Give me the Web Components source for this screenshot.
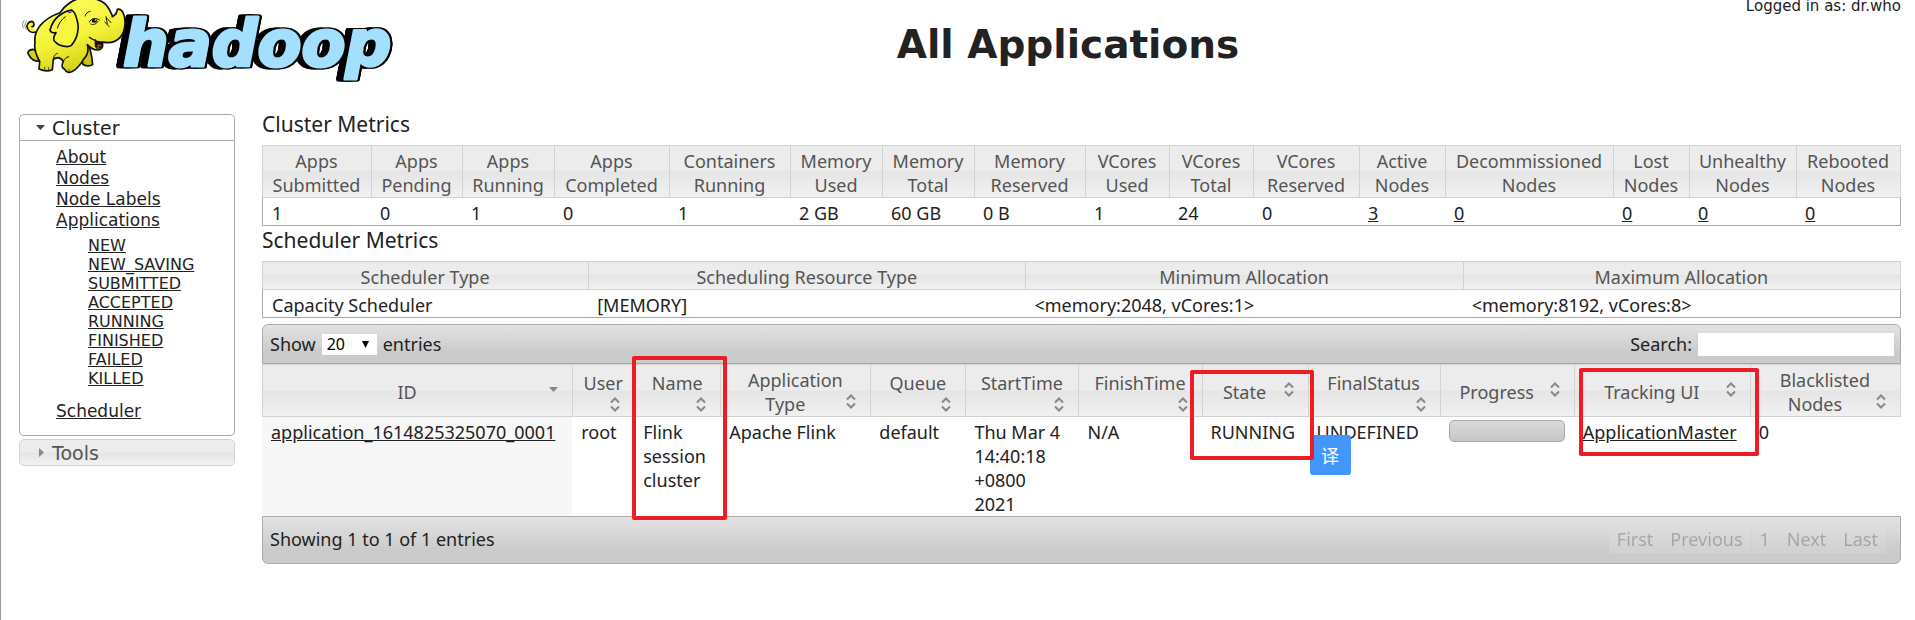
<!DOCTYPE html>
<html lang="en">
<head>
<meta charset="utf-8">
<title>All Applications</title>
<style>
body {
  margin: 0;
  min-height: 100vh;
  box-sizing: border-box;
  border-left: 1px solid #999;
  background: #fff;
  color: #222;
  font: 18px/24px "Noto Sans", "Noto Sans CJK SC", sans-serif;
  --ui-font: "DejaVu Sans", sans-serif;
  --line: #aaa;
  --soft-line: #d3d3d3;
  --glass: linear-gradient(#ececec 0, #ececec 48%, #e5e5e5 52%, #f1f1f1 100%);
  --bar: linear-gradient(#e3e3e3 0, #cbcbcb 70%, #cbcbcb 100%);
}
</style>
</head>
<body>
<yarn-page>
  <page-header slot="header" user="dr.who">All Applications</page-header>
  <side-nav slot="nav"></side-nav>
  <metrics-table id="cluster" caption="Cluster Metrics"></metrics-table>
  <metrics-table id="scheduler" caption="Scheduler Metrics"></metrics-table>
  <apps-table></apps-table>
</yarn-page>

<script>
const define = (name, html, init) => {
  const template = document.createElement('template');
  template.innerHTML = html;
  customElements.define(name, class extends HTMLElement {
    constructor() {
      super();
      this.attachShadow({ mode: 'open' }).append(template.content.cloneNode(true));
    }
    connectedCallback() { if (init) init(this, this.shadowRoot); }
  });
};

define('yarn-page', `
<style>
:host { display: block; padding: 0 14px 0 18px; }
.columns { display: grid; grid-template-columns: 216px minmax(0, 1fr); gap: 27px; }
nav { padding-top: 4px; }
</style>
<header><slot name="header"></slot></header>
<div class="columns">
  <nav><slot name="nav"></slot></nav>
  <main><slot></slot></main>
</div>`);

define('hadoop-logo', `
<style>
:host { display: block; }
svg { display: block; overflow: visible; }
text {
  font: italic bold 64px "DejaVu Sans", sans-serif; stroke-linejoin: round;
  filter: drop-shadow(2px 0 0 #000) drop-shadow(-7px 0 0 #000) drop-shadow(0 1px 0 #000) drop-shadow(0 -1px 0 #000);
}
</style>
<svg width="216" height="84" viewBox="19 0 216 84" role="img" aria-label="hadoop">
  <text x="123" y="66" fill="#a3dfff" stroke="#a3dfff" stroke-width="3">hadoop</text>
  <defs>
    <linearGradient id="skin" x1="0" y1="0" x2="0.4" y2="1">
      <stop offset="0" stop-color="#ffff6a"/><stop offset="0.6" stop-color="#f3f338"/><stop offset="1" stop-color="#d4cf18"/>
    </linearGradient>
  </defs>
  <g transform="scale(.33333)" stroke="#111" stroke-width="5" stroke-linecap="round" stroke-linejoin="round" fill="none">
    <path d="M108 96C96 100 86 94 82 84C78 74 86 64 96 64C104 68 104 80 96 80" fill="#f3f338"/>
    <path d="M70 84C66 76 67 68 72 62M78 88C73 80 74 70 80 62" stroke-width="2" stroke="#555"/>
    <path d="M98 148C86 150 80 156 86 164C92 178 106 186 120 183L126 160Z" fill="#d4cf18"/>
    <path d="M244 160L248 192C256 199 270 199 278 194L275 170C273 158 270 150 268 138Z" fill="#c9c414"/>
    <path fill="url(#skin)" d="M205 12C235-14 290-12 318 14C330 28 334 40 338 50C346 44 352 40 352 28C366 24 376 45 375 70C374 105 355 128 322 128L306 126C312 140 304 150 292 150C280 150 272 145 262 134C266 150 264 164 252 176C240 196 230 208 218 214C208 220 198 216 194 208C184 203 184 196 190 184C187 178 184 175 174 173C168 174 163 175 160 178L157 209C146 214 130 213 117 207L119 186C112 170 100 150 105 128C100 90 130 55 180 38C188 26 196 18 205 12Z"/>
    <path d="M160 178C162 166 166 162 172 160M190 184C194 176 198 172 206 170M120 183C116 178 112 172 110 166" stroke-width="3"/>
    <path fill="#f6f640" d="M214 30C192 34 160 50 150 90C152 98 160 100 168 98C158 112 160 124 166 126C176 138 204 144 214 136C232 116 240 84 230 56C227 44 222 34 214 30Z"/>
    <path d="M196 50C184 58 176 72 172 84M206 38L214 36M206 12C196 18 188 26 182 36" stroke-width="3"/>
    <path d="M255 48C257 40 263 36 270 34M268 66C274 54 288 52 298 60M272 72C280 76 290 72 294 64M320 54L333 68M314 66L328 80M318 50L322 72M336 50L350 42" stroke-width="3"/>
    <ellipse cx="283" cy="62" rx="8" ry="6" fill="#111" stroke="none"/>
    <circle cx="286" cy="60" r="2" fill="#fff" stroke="none"/>
    <path d="M268 112C284 124 302 128 318 128M286 120C286 132 284 140 290 144C302 146 310 138 306 126" stroke-width="4"/>
    <path d="M288 122L306 127C308 138 298 144 288 140Z" fill="#111" stroke="none"/>
    <path d="M291 137C294 132 300 132 303 136L296 141Z" fill="#c33" stroke="none"/>
    <path d="M134 202L134 208M146 203L146 209M206 208L210 213" stroke-width="2"/>
  </g>
</svg>`);

define('page-header', `
<style>
:host { display: block; font-family: var(--ui-font); }
.head { display: grid; grid-template-columns: 216px minmax(0, 1fr); grid-template-rows: auto 1fr; min-height: 110px; }
hadoop-logo { grid-row: 1 / 3; }
.user { text-align: right; font-size: 15px; line-height: 12px; }
h1 { margin: 9px 0 0; text-align: center; font-size: 39px; line-height: 48px; }
</style>
<div class="head">
  <hadoop-logo></hadoop-logo>
  <div class="user"></div>
  <h1><slot></slot></h1>
</div>`, (host, root) => {
  root.querySelector('.user').textContent = 'Logged in as: ' + host.getAttribute('user');
});

define('nav-section', `
<style>
:host { display: block; margin-bottom: 3px; font-family: var(--ui-font); }
button {
  display: flex; align-items: center; gap: 6px; width: 100%; height: 27px; box-sizing: border-box;
  padding: 0 16px; border: 1px solid var(--soft-line); border-radius: 5px;
  background: var(--glass); color: #555; font: 19px/24px var(--ui-font); text-align: left;
}
svg { width: 10px; height: 10px; fill: #888; }
.open { display: none; }
.panel { display: none; }
:host([open]) button { background: #fff; color: #222; border-color: var(--line); border-radius: 5px 5px 0 0; }
:host([open]) .open { display: block; fill: #444; }
:host([open]) .closed { display: none; }
:host([open]) .panel { display: block; padding: 6px 0 13px 36px; border: 1px solid var(--line); border-top: 0; border-radius: 0 0 5px 5px; }
</style>
<button type="button">
  <svg class="open" viewBox="0 0 10 10"><path d="M0 2H9L4.500 7Z"/></svg>
  <svg class="closed" viewBox="0 0 10 10"><path d="M3 0V9L8 4.500Z"/></svg>
  <span></span>
</button>
<div class="panel"><slot></slot></div>`, (host, root) => {
  root.querySelector('span').textContent = host.getAttribute('label');
  const button = root.querySelector('button');
  button.setAttribute('aria-expanded', host.hasAttribute('open'));
  button.onclick = () => button.setAttribute('aria-expanded', host.toggleAttribute('open'));
});

define('side-nav', `
<style>
:host { display: block; font: 17px/21px var(--ui-font); }
ul { list-style: none; margin: 0; padding: 0; }
ul ul { margin: 5px 0 13px; padding-left: 32px; font-size: 16px; line-height: 19px; }
a { color: #222; }
</style>
<nav-section label="Cluster" open>
  <ul>
    <li><a href="#about">About</a></li>
    <li><a href="#nodes">Nodes</a></li>
    <li><a href="#labels">Node Labels</a></li>
    <li><a href="#apps">Applications</a>
      <ul>
        <li><a href="#new">NEW</a></li>
        <li><a href="#new-saving">NEW_SAVING</a></li>
        <li><a href="#submitted">SUBMITTED</a></li>
        <li><a href="#accepted">ACCEPTED</a></li>
        <li><a href="#running">RUNNING</a></li>
        <li><a href="#finished">FINISHED</a></li>
        <li><a href="#failed">FAILED</a></li>
        <li><a href="#killed">KILLED</a></li>
      </ul>
    </li>
    <li><a href="#scheduler">Scheduler</a></li>
  </ul>
</nav-section>
<nav-section label="Tools"></nav-section>`);

const METRICS = {
  cluster: [
    ['Apps Submitted', '1', 109], ['Apps Pending', '0', 91], ['Apps Running', '1', 92],
    ['Apps Completed', '0', 115], ['Containers Running', '1', 121], ['Memory Used', '2 GB', 92],
    ['Memory Total', '60 GB', 92], ['Memory Reserved', '0 B', 111], ['VCores Used', '1', 84],
    ['VCores Total', '24', 84], ['VCores Reserved', '0', 106], ['Active Nodes', '3', 86, 1],
    ['Decommissioned Nodes', '0', 168, 1], ['Lost Nodes', '0', 76, 1],
    ['Unhealthy Nodes', '0', 107, 1], ['Rebooted Nodes', '0', 105, 1]
  ],
  scheduler: [
    ['Scheduler Type', 'Capacity Scheduler', 326], ['Scheduling Resource Type', '[MEMORY]', 437],
    ['Minimum Allocation', '<memory:2048, vCores:1>', 437], ['Maximum Allocation', '<memory:8192, vCores:8>', 438]
  ]
};
define('metrics-table', `
<style>
:host { display: block; }
h2 { margin: 0 0 7px; font-size: 21px; line-height: 28px; font-weight: 400; }
table { width: 100%; table-layout: fixed; border-spacing: 0; }
thead { background: var(--glass); }
th { padding: 3px 1px 0 0; border: solid var(--soft-line); border-width: 1px 0 0 1px; color: #555; font-weight: 400; }
th:last-child { border-right-width: 1px; }
td { padding: 3px 0 0 9px; border: solid var(--line); border-width: 1px 0; border-top-color: var(--soft-line); }
td:first-child { border-left-width: 1px; }
td:last-child { border-right-width: 1px; }
th span { display: block; }
a { color: #222; }
</style>
<h2></h2>
<table><colgroup></colgroup><thead><tr></tr></thead><tbody><tr></tr></tbody></table>`, (host, root) => {
  root.querySelector('h2').textContent = host.getAttribute('caption');
  for (const [label, value, width, linked] of METRICS[host.id]) {
    const col = document.createElement('col');
    col.style.width = width + 'px';
    const th = document.createElement('th');
    th.scope = 'col';
    for (const part of host.id === 'cluster' ? label.split(' ') : [label]) {
      const line = document.createElement('span');
      line.textContent = part;
      th.append(line);
    }
    const td = document.createElement('td');
    if (linked) {
      const a = document.createElement('a');
      a.href = '#nodes';
      a.textContent = value;
      td.append(a);
    } else td.textContent = value;
    root.querySelector('colgroup').append(col);
    root.querySelector('thead tr').append(th);
    root.querySelector('tbody tr').append(td);
  }
});

define('sort-icon', `
<style>
:host { display: block; float: right; width: 20px; height: 18px; }
svg { display: block; width: 20px; height: 18px; fill: none; stroke: #888; stroke-width: 2; }
.down { display: none; fill: #888; stroke: none; }
:host([active]) .both { display: none; }
:host([active]) .down { display: block; }
</style>
<svg class="both" viewBox="0 0 20 18"><path d="M7 7.500L11 3.500L15 7.500M7 11.500L11 15.500L15 11.500"/></svg>
<svg class="down" viewBox="0 0 20 18"><path d="M7 7H16L11.500 12Z"/></svg>`);

define('mark-box', `
<style>
:host { display: block; position: absolute; box-sizing: border-box; border: 4px solid #ee1c25; border-radius: 2px; z-index: 2; pointer-events: none; }
</style>`);

define('apps-table', `
<style>
:host { display: block; margin-top: 6px; }
.bar { display: flex; justify-content: space-between; align-items: center; box-sizing: border-box; background: var(--bar); border: 1px solid var(--line); }
.top { height: 40px; padding: 0 6px 0 7px; border-radius: 6px 6px 0 0; }
.bottom { height: 48px; padding: 0 13px 2px 7px; border-radius: 0 0 6px 6px; }
label { display: flex; align-items: center; gap: 6px; }
.pick { display: grid; align-items: center; }
.pick > * { grid-area: 1 / 1; }
select { appearance: none; width: 55px; height: 21px; padding: 0 5px; border: 0; border-radius: 0; background: #fff; color: #000; font: 16px/21px "Noto Sans", sans-serif; }
.pick svg { justify-self: end; margin-right: 8px; width: 7px; height: 7px; pointer-events: none; }
input { width: 196px; height: 23px; box-sizing: border-box; padding: 0 4px; border: 0; background: #fff; font: inherit; }
table { width: 100%; table-layout: fixed; border-spacing: 0; }
thead { background: var(--glass); }
th { position: relative; box-sizing: border-box; height: 53px; padding: 3px 10px 0 9px; border: solid var(--soft-line); border-width: 1px 0 1px 1px; color: #555; font-weight: 400; vertical-align: middle; }
th:last-child { border-right-width: 1px; }
td { position: relative; padding: 3px 0 0 9px; vertical-align: top; }
td:first-child { background: #f7f7f7; }
td a { color: #222; }
.narrow { padding-right: 10px; }
.progress { width: 116px; height: 22px; box-sizing: border-box; border: 1px solid var(--line); border-radius: 5px; background: linear-gradient(#dadada, #c6c6c6); }
.translate { position: absolute; left: 2px; top: 18px; z-index: 1; width: 41px; height: 40px; padding: 0; border: 0; border-radius: 3px; background: #4496ff; color: #fff; font: 18px/40px "Noto Sans CJK SC", sans-serif; }
.name { left: -3px; top: -9px; width: 95px; height: 164px; }
.state { left: -13px; top: 5px; width: 124px; height: 90px; }
.tracking { left: 4px; top: 3px; width: 180px; height: 88px; }
.pager { display: flex; border-radius: 5px; overflow: hidden; }
.pager button { height: 30px; padding: 0 8px; border: 1px solid #d3d3d3; border-left-width: 0; background: #e0e0e0; color: #555; font: inherit; line-height: 28px; opacity: .35; }
</style>
<div class="bar top">
  <label>Show
    <span class="pick"><select><option>20</option><option>40</option><option>60</option><option>80</option><option>100</option></select>
    <svg viewBox="0 0 8 8"><path d="M0 0H8L4 8Z"/></svg></span>
  entries</label>
  <label>Search: <input type="text"></label>
</div>
<table>
  <colgroup>
    <col style="width:310px"><col style="width:62px"><col style="width:86px"><col style="width:150px"><col style="width:95px"><col style="width:113px">
    <col style="width:123px"><col style="width:106px"><col style="width:132px"><col style="width:134px"><col style="width:176px"><col style="width:151px">
  </colgroup>
  <thead><tr>
    <th scope="col">ID<sort-icon active></sort-icon></th>
    <th scope="col">User<sort-icon></sort-icon></th>
    <th scope="col">Name<sort-icon></sort-icon><mark-box class="name"></mark-box></th>
    <th scope="col">Application Type<sort-icon></sort-icon></th>
    <th scope="col">Queue<sort-icon></sort-icon></th>
    <th scope="col">StartTime<sort-icon></sort-icon></th>
    <th scope="col">FinishTime<sort-icon></sort-icon></th>
    <th scope="col">State<sort-icon></sort-icon><mark-box class="state"></mark-box></th>
    <th scope="col">FinalStatus<sort-icon></sort-icon></th>
    <th scope="col">Progress<sort-icon></sort-icon></th>
    <th scope="col">Tracking UI<sort-icon></sort-icon><mark-box class="tracking"></mark-box></th>
    <th scope="col">Blacklisted Nodes<sort-icon></sort-icon></th>
  </tr></thead>
  <tbody><tr>
    <td><a href="#app">application_1614825325070_0001</a></td>
    <td>root</td>
    <td>Flink session cluster</td>
    <td>Apache Flink</td>
    <td>default</td>
    <td class="narrow">Thu Mar 4 14:40:18 +0800 2021</td>
    <td>N/A</td>
    <td>RUNNING</td>
    <td>UNDEFINED<button class="translate" type="button">译</button></td>
    <td><div class="progress" role="progressbar" aria-label="Progress" aria-valuenow="0"></div></td>
    <td><a href="#master">ApplicationMaster</a></td>
    <td>0</td>
  </tr></tbody>
</table>
<div class="bar bottom">
  <span>Showing 1 to 1 of 1 entries</span>
  <div class="pager">
    <button type="button">First</button><button type="button">Previous</button><button type="button">1</button><button type="button">Next</button><button type="button">Last</button>
  </div>
</div>`);
</script>
</body>
</html>
